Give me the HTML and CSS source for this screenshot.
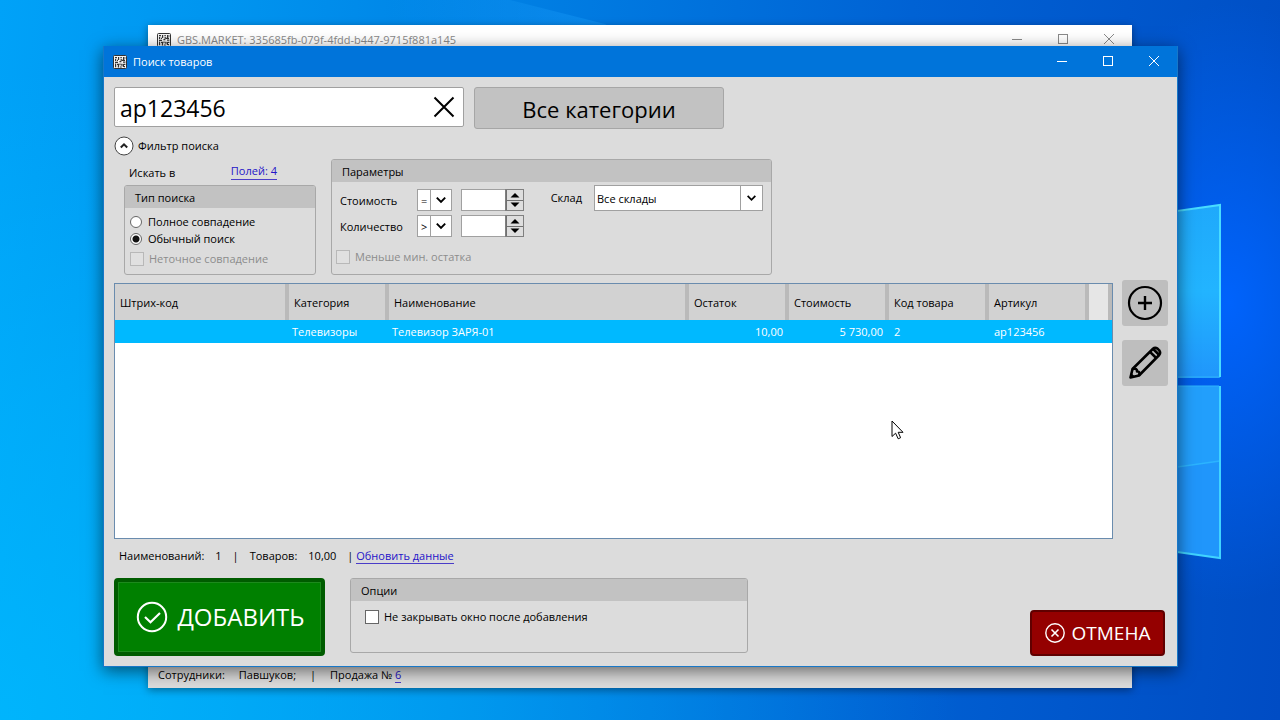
FILE: index.html
```html
<!DOCTYPE html>
<html lang="ru">
<head>
<meta charset="utf-8">
<title>Поиск товаров</title>
<link rel="stylesheet" href="styles.css">
</head>
<body>
<svg class="defs" aria-hidden="true">
  <symbol id="app" viewBox="0 0 14 14">
    <rect x="0.5" y="0.5" width="13" height="13" rx="1" fill="#f4f4f4" stroke="currentColor"/>
    <path fill="none" stroke="currentColor" stroke-width="1.2" d="M2 2.6h2M5.6 2v3M7.4 2.6h1.4M10.6 2v3M2.6 4v2M4 5.4h1M8.2 4v2M9 5.4h3M12 2.6v1M2 7.4h3M6.4 6.6h2M10 7.2h2.4M2.6 8.6v3.6M4 9.4h1.4v3M7 8.4v1.8M6.8 12h2M8.8 8.8v2M10.4 9v3M10.4 9.4h2M12 11.6h-1"/>
  </symbol>
  <symbol id="min" viewBox="0 0 12 12"><path d="M1 6.5h10" fill="none" stroke="currentColor"/></symbol>
  <symbol id="max" viewBox="0 0 12 12"><rect x="1.5" y="1.5" width="9" height="9" fill="none" stroke="currentColor"/></symbol>
  <symbol id="close" viewBox="0 0 12 12"><path d="M1 1l10 10M11 1L1 11" fill="none" stroke="currentColor"/></symbol>
  <symbol id="down" viewBox="0 0 10 10"><path d="M1.500 3l3.500 3.600L8.500 3" fill="none" stroke="currentColor" stroke-width="1.600"/></symbol>
  <symbol id="tri" viewBox="0 0 10 6"><path d="M0.500 5.500L5 1l4.500 4.500z" fill="currentColor"/></symbol>
</svg>
<main class="desktop">
  <svg class="beam" viewBox="0 0 240 40" aria-hidden="true">
    <defs>
      <linearGradient id="ray" gradientUnits="userSpaceOnUse" x1="0" y1="0" x2="220" y2="0">
        <stop offset="0" stop-color="#20a4ff" stop-opacity="0"/><stop offset="1" stop-color="#20a4ff" stop-opacity="0.350"/>
      </linearGradient>
    </defs>
    <path d="M0 0H120L215 24L240 40H0z" fill="url(#ray)"/>
  </svg>
  <svg class="wall-logo" viewBox="0 0 60 370" aria-hidden="true">
    <defs>
      <linearGradient id="pane" x1="0" y1="0" x2="0" y2="1">
        <stop offset="0" stop-color="#1fa9fb"/><stop offset="0.5" stop-color="#22b4ff"/><stop offset="1" stop-color="#2096fb"/>
      </linearGradient>
    </defs>
    <path d="M0 13L50 5V178H0z" fill="url(#pane)"/>
    <path d="M0 186H50V358L0 351z" fill="#2096fb"/>
    <path d="M0 268L50 261V186H0z" fill="#229ffc"/>
    <path d="M0 268L50 261" stroke="#2cb4ff" stroke-width="1.500"/>
    <path d="M0 12L50 5V177" fill="none" stroke="#48dcff" stroke-width="2"/>
    <path d="M0 177H49M0 186H49" stroke="#2fb4fb"/>
    <path d="M50 186V358L0 351" fill="none" stroke="#40d4ff" stroke-width="2"/>
  </svg>

  <section class="window back" aria-label="GBS.MARKET">
    <header class="titlebar">
      <svg class="app-icon"><use href="#app"/></svg>
      <h2 class="title">GBS.MARKET: 335685fb-079f-4fdd-b447-9715f881a145</h2>
      <button class="win-btn" aria-label="Свернуть"><svg><use href="#min"/></svg></button>
      <button class="win-btn" aria-label="Развернуть"><svg><use href="#max"/></svg></button>
      <button class="win-btn" aria-label="Закрыть"><svg><use href="#close"/></svg></button>
    </header>
    <footer class="back-status">
      <span>Сотрудники:</span><span>Павшуков;</span><span>|</span><span>Продажа № <a class="link" href="#">6</a></span>
    </footer>
  </section>

  <section class="window dialog" role="dialog" aria-labelledby="dlg-title">
    <header class="titlebar">
      <svg class="app-icon"><use href="#app"/></svg>
      <h1 class="title" id="dlg-title">Поиск товаров</h1>
      <button class="win-btn" aria-label="Свернуть"><svg><use href="#min"/></svg></button>
      <button class="win-btn" aria-label="Развернуть"><svg><use href="#max"/></svg></button>
      <button class="win-btn" aria-label="Закрыть"><svg><use href="#close"/></svg></button>
    </header>

    <div class="content">
      <div class="search-row">
        <div class="search-box">
          <input class="search-input" type="text" value="ap123456" aria-label="Поиск">
          <button class="clear-btn" aria-label="Очистить"><svg viewBox="0 0 22 22"><path d="M1.500 1.500l19 19M20.500 1.500l-19 19" fill="none" stroke="#000" stroke-width="2"/></svg></button>
        </div>
        <button class="category-btn">Все категории</button>
      </div>

      <button class="expander" aria-expanded="true">
        <svg viewBox="0 0 20 20"><circle cx="10" cy="10" r="9" fill="#fff" stroke="#444"/><path d="M6.800 11.500L10 8.300l3.200 3.200" fill="none" stroke="#222" stroke-width="2"/></svg>
        Фильтр поиска
      </button>

      <div class="filters">
        <div class="filter-left">
          <div class="fields"><span>Искать в</span><a class="link" href="#">Полей: 4</a></div>
          <section class="group type-group">
            <h3 class="group-title">Тип поиска</h3>
            <div class="type-body">
              <label class="option"><input type="radio" name="mode"> Полное совпадение</label>
              <label class="option"><input type="radio" name="mode" checked> Обычный поиск</label>
              <label class="option check disabled"><input type="checkbox" disabled> Неточное совпадение</label>
            </div>
          </section>
        </div>

        <section class="group params">
          <h3 class="group-title">Параметры</h3>
          <div class="params-body">
            <div class="param-grid">
              <label for="cost">Стоимость</label>
              <div class="combo small"><select aria-label="Условие стоимости"><option>=</option></select><svg><use href="#down"/></svg></div>
              <div class="spin"><input id="cost" type="number"><div class="spin-btns"><button aria-label="Больше"><svg><use href="#tri"/></svg></button><button aria-label="Меньше"><svg class="flip"><use href="#tri"/></svg></button></div></div>
              <label for="qty">Количество</label>
              <div class="combo small"><select aria-label="Условие количества"><option>&gt;</option></select><svg><use href="#down"/></svg></div>
              <div class="spin"><input id="qty" type="number"><div class="spin-btns"><button aria-label="Больше"><svg><use href="#tri"/></svg></button><button aria-label="Меньше"><svg class="flip"><use href="#tri"/></svg></button></div></div>
            </div>
            <div class="stock">
              <label for="stock">Склад</label>
              <div class="combo"><select id="stock"><option>Все склады</option></select><svg><use href="#down"/></svg></div>
            </div>
          </div>
          <label class="option check disabled min-left"><input type="checkbox" disabled> Меньше мин. остатка</label>
        </section>
      </div>

      <div class="results">
        <div class="grid-box">
          <table class="goods">
            <colgroup><col class="c-code"><col class="c-std"><col class="c-name"><col class="c-std"><col class="c-std"><col class="c-std"><col class="c-std"><col></colgroup>
            <thead><tr><th>Штрих-код</th><th>Категория</th><th>Наименование</th><th>Остаток</th><th>Стоимость</th><th>Код товара</th><th>Артикул</th><th class="filler"></th></tr></thead>
            <tbody><tr><td></td><td>Телевизоры</td><td>Телевизор ЗАРЯ-01</td><td class="num">10,00</td><td class="num">5 730,00</td><td class="txt">2</td><td class="txt">ap123456</td><td></td></tr></tbody>
          </table>
        </div>
        <div class="tools">
          <button class="tool" aria-label="Добавить товар"><svg viewBox="0 0 36 36"><circle cx="18" cy="18" r="16" fill="none" stroke="#000" stroke-width="2.200"/><path d="M18 11v14M11 18h14" stroke="#000" stroke-width="2.400"/></svg></button>
          <button class="tool" aria-label="Изменить товар"><svg viewBox="0 0 36 36"><g fill="none" stroke="#000" stroke-width="2.600" stroke-linejoin="round"><path d="M3.500 32.500L5.500 24L26 3.800Q28 2 30.500 3.600L32.200 5.300Q34 7.800 32.200 10L12 30.500z"/><path d="M5.500 24Q10.500 23 10 26.500Q13.500 26 12 30.500M23 6.800l6.200 6.200M26.200 4l6 6"/></g><path d="M3 33l1.200-5 3.800 3.800z" fill="#000"/></svg></button>
        </div>
      </div>

      <div class="totals">
        <span>Наименований:</span><span>1</span><span>|</span><span>Товаров:</span><span>10,00</span><span class="tail">| <a class="link" href="#">Обновить данные</a></span>
      </div>

      <footer class="actions">
        <button class="add-btn"><svg viewBox="0 0 32 32"><circle cx="16" cy="16" r="14.200" fill="none" stroke="#fff" stroke-width="2"/><path d="M9 16l5.500 5.200L24 12" fill="none" stroke="#fff" stroke-width="2.200"/></svg>ДОБАВИТЬ</button>
        <section class="group opts">
          <h3 class="group-title">Опции</h3>
          <label class="option check keep"><input type="checkbox"> Не закрывать окно после добавления</label>
        </section>
        <button class="cancel-btn"><svg viewBox="0 0 20 20"><circle cx="10" cy="10" r="9.200" fill="none" stroke="#fff" stroke-width="1.400"/><path d="M6.500 6.500l7 7M13.500 6.500l-7 7" stroke="#fff" stroke-width="1.600"/></svg>ОТМЕНА</button>
      </footer>
    </div>
  </section>

  <svg class="cursor" viewBox="0 0 13 20" aria-hidden="true"><path d="M1 1V16.500L4.600 13.200L7.200 18.800L9.600 17.700L7.200 12.300H12z" fill="#fff" stroke="#000"/></svg>
</main>
</body>
</html>
```
FILE: styles.css
```css
* { box-sizing: border-box; }

body {
  margin: 0;
  font: 11px/16px "Open Sans", "Noto Sans", sans-serif;
  color: #000;
}

button, input, select { font: inherit; color: inherit; margin: 0; }
button { padding: 0; border: 0; background: none; }
h1, h2, h3 { margin: 0; font: inherit; }
svg { display: block; flex: none; }
.defs { position: absolute; width: 0; height: 0; }

.desktop {
  position: relative;
  height: 100vh;
  min-height: 640px;
  overflow: hidden;
  background:
    radial-gradient(ellipse 180px 300px at 96% 42%, rgba(0, 100, 255, 0.95), transparent),
    radial-gradient(ellipse 75% 90% at 0 100%, rgba(0, 190, 255, 0.7), rgba(0, 190, 255, 0.4) 50%, transparent),
    linear-gradient(95deg, #00a2f8 0%, #0096f0 15%, #0080e4 38%, #0062d4 68%, #004cc4 100%);
}

.beam { position: absolute; left: 390px; top: 0; width: 240px; height: 40px; }
.wall-logo { position: absolute; left: 1170px; top: 200px; width: 60px; height: 370px; }

.window { position: absolute; display: flex; flex-direction: column; }

.back {
  inset: 25px 148px 32px 148px;
  justify-content: space-between;
  background: #dcdcdc;
  box-shadow: 0 2px 8px rgba(0, 0, 0, 0.4);
}
.back .titlebar { height: 30px; background: #fff; color: #8a8a8a; padding-left: 9px; }
.back-status { display: flex; gap: 14px; padding: 0 10px 5px; }

.dialog {
  inset: 46px 102px 53px 103px;
  background: #dcdcdc;
  border: 1px solid #1878c8;
  border-top: 0;
  box-shadow: 0 4px 16px rgba(0, 0, 0, 0.55);
}

.titlebar { display: flex; align-items: center; height: 31px; flex: none; }
.dialog .titlebar { background: #0074da; color: #fff; padding-left: 9px; }
.app-icon { width: 14px; height: 14px; color: #333; margin-right: 6px; }
.title { flex: 1; white-space: nowrap; }
.win-btn { width: 46px; height: 30px; display: grid; place-items: center; align-self: flex-start; }
.back .win-btn { height: 28px; }
.win-btn svg { width: 12px; height: 12px; }

.content { flex: 1; display: flex; flex-direction: column; padding: 10px 9px 10px 10px; min-height: 0; }

.search-row { display: flex; align-items: flex-start; gap: 10px; }
.search-box { display: flex; width: 350px; height: 40px; background: #fff; border: 1px solid #a0a0a0; border-radius: 2px; }
.search-input { flex: 1; min-width: 0; border: 0; background: none; padding: 2px 5px 0; font-size: 23px; outline: 0; }
.clear-btn { width: 38px; display: grid; place-items: center; }
.clear-btn svg { width: 22px; height: 22px; }
.category-btn { width: 250px; height: 42px; padding-top: 2px; font-size: 22px; background: #c2c2c2; border: 1px solid #a6a6a6; border-radius: 3px; }

.expander { display: flex; align-items: center; gap: 4px; align-self: flex-start; margin-top: 7px; }
.expander svg { width: 20px; height: 20px; }

.link { color: #2414c8; text-decoration: none; border-bottom: 1px solid #4a3cc8; }

.filters { display: flex; gap: 15px; padding-left: 10px; margin-top: 3px; }
.filter-left { width: 192px; display: flex; flex-direction: column; }
.fields { display: flex; align-items: flex-start; justify-content: space-between; padding: 4px 39px 0 5px; height: 26px; line-height: 16px; }
.fields span { padding-top: 2px; }

.group { border: 1px solid #a8a8a8; border-radius: 3px; overflow: hidden; }
.group-title { height: 22px; padding: 4px 10px 2px; background: #c2c2c2; }
.type-group { flex: 1; }
.type-body { display: flex; flex-direction: column; padding: 5px 5px 0; }

.option { display: flex; align-items: center; gap: 6px; height: 17px; white-space: nowrap; }
.option input {
  appearance: none;
  width: 12px;
  height: 12px;
  border: 1px solid #666;
  border-radius: 50%;
  background: #fff;
}
.option input:checked { background: radial-gradient(circle, #111 0 3px, #fff 4px); }
.option.check { gap: 5px; }
.option.check input { width: 14px; height: 14px; border-radius: 0; }
.option.disabled { color: #8c8c8c; }
.option.disabled input { border-color: #b8b8b8; background: #e0e0e0; }
.type-body .disabled { margin-top: 3px; }

.params { width: 441px; height: 116px; display: flex; flex-direction: column; }
.params-body { display: flex; justify-content: space-between; align-items: flex-start; padding: 3px 8px 0; }
.param-grid { display: grid; grid-template-columns: 77px 35px 72px; row-gap: 4px; align-items: center; padding-top: 4px; }
.param-grid label { padding-top: 2px; }
.param-grid .spin { margin-left: 9px; }
.stock { display: flex; align-items: center; gap: 12px; }
.combo { display: grid; grid-template-columns: 1fr 22px; align-items: center; width: 169px; height: 26px; background: #fff; border: 1px solid #a0a0a0; }
.combo select { grid-area: 1 / 1 / 2 / 3; appearance: none; width: 100%; height: 100%; border: 0; background: none; padding: 2px 2px 0; outline: 0; }
.combo svg { grid-area: 1 / 2; width: 100%; height: 100%; padding: 6px 5px; border-left: 1px solid #a0a0a0; pointer-events: none; }
.combo.small { grid-template-columns: 1fr 21px; width: 35px; height: 22px; }
.combo.small svg { padding: 4px 4px; }
.combo.small select { padding: 2px 3px 0; }
.spin { display: flex; width: 63px; height: 22px; border: 1px solid #a0a0a0; background: #fff; }
.spin input { flex: 1; min-width: 0; border: 0; background: none; appearance: textfield; outline: 0; padding: 0 2px; }
.spin input::-webkit-inner-spin-button { appearance: none; }
.spin-btns { width: 17px; display: grid; grid-template-rows: 1fr 1fr; gap: 1px; background: #707070; border: 1px solid #707070; border-width: 0 0 0 1px; outline: 1px solid #808080; }
.spin-btns button { display: grid; place-items: center; background: #dedede; }
.spin-btns svg { width: 10px; height: 6px; }
.flip { transform: rotate(180deg); }
.min-left { margin: 11px 0 0 4px; }

.results { flex: 1; min-height: 0; display: flex; gap: 9px; margin-top: 5px; }
.grid-box { flex: 1; min-width: 0; margin-top: 3px; background: #fff; border: 1px solid #6a8cae; overflow: hidden; }
.goods { width: 100%; table-layout: fixed; border-collapse: separate; border-spacing: 0; }
.c-code { width: 174px; }
.c-std { width: 100px; }
.c-name { width: 300px; }
.goods th { height: 36px; padding: 2px 5px 0; text-align: left; font-weight: 400; background: #d2d2d2; border-right: 4px solid #bababa; }
.goods .filler { background: #e6e6e6; }
.goods td { height: 23px; padding: 0 3px; background: #00b9ff; color: #fff; white-space: nowrap; }
.goods .num { text-align: right; padding-right: 6px; }
.goods .txt { padding-left: 5px; }
.tools { display: flex; flex-direction: column; gap: 14px; }
.tool { width: 46px; height: 46px; display: grid; place-items: center; background: #bebebe; border-radius: 3px; }
.tool svg { width: 36px; height: 36px; }

.totals { display: flex; gap: 11px; padding: 9px 5px 0; height: 39px; flex: none; }

.actions { display: flex; gap: 25px; align-items: flex-start; }
.add-btn {
  width: 211px;
  height: 78px;
  display: flex;
  align-items: center;
  justify-content: center;
  gap: 9px;
  font-size: 24px;
  padding-left: 2px;
  color: #fff;
  background: #008000;
  border: 4px solid #005c00;
  border-radius: 4px;
  box-shadow: inset 0 0 0 1px #1d8a1d;
}
.add-btn svg { width: 32px; height: 32px; }
.opts { flex: 0 1 398px; height: 75px; }
.keep { margin: 7px 0 0 14px; }
.cancel-btn {
  width: 135px;
  height: 46px;
  display: flex;
  align-items: center;
  justify-content: center;
  gap: 7px;
  margin: 0 3px 0 auto;
  align-self: flex-end;
  font-size: 19px;
  color: #fff;
  background: #940000;
  border: 2px solid #600000;
  border-radius: 4px;
}
.cancel-btn svg { width: 20px; height: 20px; }

.cursor { position: absolute; left: 891px; top: 420px; width: 13px; height: 20px; }
```
